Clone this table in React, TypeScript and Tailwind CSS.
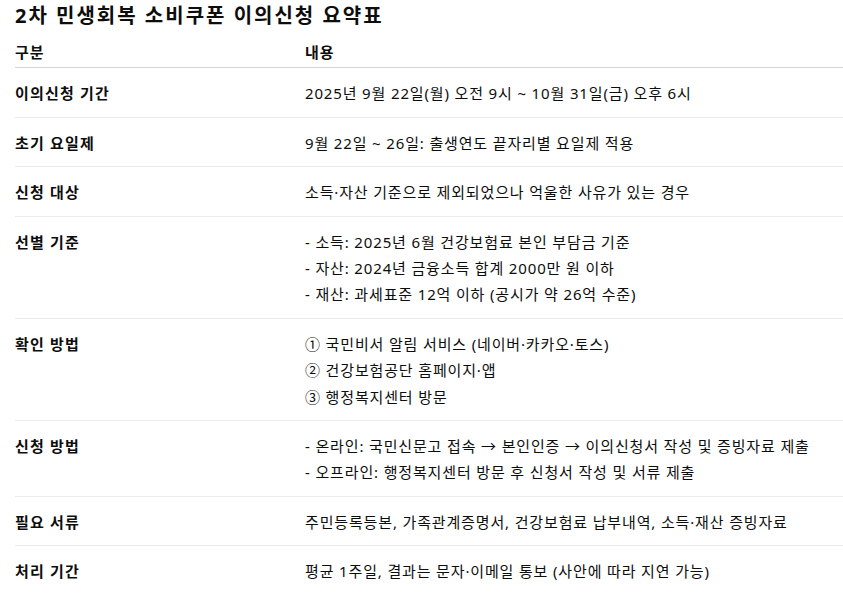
const rows: { label: string; lines: string[] }[] = [
  { label: '이의신청 기간', lines: ['2025년 9월 22일(월) 오전 9시 ~ 10월 31일(금) 오후 6시'] },
  { label: '초기 요일제', lines: ['9월 22일 ~ 26일: 출생연도 끝자리별 요일제 적용'] },
  { label: '신청 대상', lines: ['소득·자산 기준으로 제외되었으나 억울한 사유가 있는 경우'] },
  {
    label: '선별 기준',
    lines: [
      '- 소득: 2025년 6월 건강보험료 본인 부담금 기준',
      '- 자산: 2024년 금융소득 합계 2000만 원 이하',
      '- 재산: 과세표준 12억 이하 (공시가 약 26억 수준)',
    ],
  },
  {
    label: '확인 방법',
    lines: ['① 국민비서 알림 서비스 (네이버·카카오·토스)', '② 건강보험공단 홈페이지·앱', '③ 행정복지센터 방문'],
  },
  {
    label: '신청 방법',
    lines: [
      '- 온라인: 국민신문고 접속 → 본인인증 → 이의신청서 작성 및 증빙자료 제출',
      '- 오프라인: 행정복지센터 방문 후 신청서 작성 및 서류 제출',
    ],
  },
  { label: '필요 서류', lines: ['주민등록등본, 가족관계증명서, 건강보험료 납부내역, 소득·재산 증빙자료'] },
  { label: '처리 기간', lines: ['평균 1주일, 결과는 문자·이메일 통보 (사안에 따라 지연 가능)'] },
];

export default function App() {
  return (
    <div className="min-h-screen bg-white pl-[15px] text-[#0d0d0d] font-['Noto_Sans','Noto_Sans_CJK_KR',sans-serif]">
      {/* Title */}
      <h2 className="pt-[2px] text-[20px] font-bold leading-[28px] tracking-[2px]">2차 민생회복 소비쿠폰 이의신청 요약표</h2>

      {/* Table */}
      <div className="mt-[5px] text-[15px] leading-[26.4px]">
        <div className="grid grid-cols-[290px_1fr] border-b border-[#d4d4d4] pt-[4px] pb-[2px] font-bold tracking-[1px]">
          <div>구분</div>
          <div>내용</div>
        </div>
        {rows.map((row, i) => (
          <div
            key={row.label}
            className={
              'grid grid-cols-[290px_1fr] pt-[12px] pb-[10px] ' + (i < rows.length - 1 ? 'border-b border-[#ececec]' : '')
            }
          >
            <div className="font-bold tracking-[1.2px]">{row.label}</div>
            <div className="whitespace-nowrap tracking-[0.85px]">
              {row.lines.map((line) => (
                <div key={line}>{line}</div>
              ))}
            </div>
          </div>
        ))}
      </div>
    </div>
  );
}
